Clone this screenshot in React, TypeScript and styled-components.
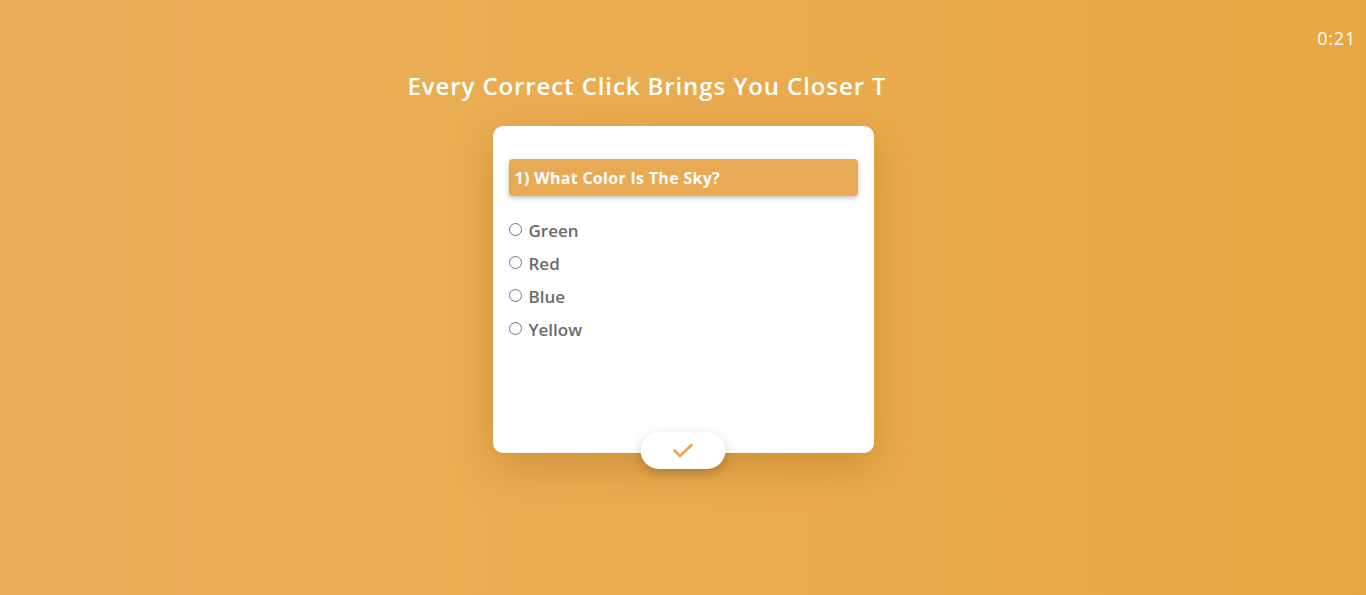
import React from "react";
import styled, { createGlobalStyle } from "styled-components";

const Global = createGlobalStyle`
  html, body { margin: 0; padding: 0; }
  body { font-family: "Open Sans", "Noto Sans", sans-serif; }
`;

const Page = styled.div`
  min-height: 595px;
  background: linear-gradient(to right, #e9b05a 0%, #e9ab4e 55%, #e8a641 100%);
  display: flex;
  flex-direction: column;
  align-items: center;
`;

const TimerRow = styled.div`
  width: 100%;
  box-sizing: border-box;
  display: flex;
  justify-content: flex-end;
  padding: 28px 10px 0 0;
`;

const Timer = styled.span`
  color: #fff;
  font-size: 18px;
  line-height: 20px;
  font-weight: 500;
  letter-spacing: 0.8px;
`;

const TitleWrap = styled.div`
  width: 551px;
  margin-top: 23px;
`;

const TitleClip = styled.h1`
  width: 477px;
  margin: 0;
  overflow: hidden;
  white-space: nowrap;
  color: #fff;
  font-size: 24px;
  line-height: 30px;
  font-weight: 600;
  letter-spacing: 0.9px;
`;

const Card = styled.div`
  position: relative;
  box-sizing: border-box;
  width: 381px;
  height: 327px;
  margin-top: 25px;
  padding: 33px 16px;
  background: #fff;
  border-radius: 10px;
  box-shadow: 0 14px 40px rgba(140, 80, 0, 0.28);
`;

const Question = styled.div`
  height: 37px;
  box-sizing: border-box;
  display: flex;
  align-items: center;
  padding: 0 6px;
  background: #e9aa55;
  border-radius: 4px;
  box-shadow: 0 2px 5px rgba(0, 0, 0, 0.25);
  color: #fff;
  font-size: 16px;
  font-weight: 700;
  letter-spacing: 0.3px;
`;

const Options = styled.div`
  margin-top: 18px;
  display: flex;
  flex-direction: column;
`;

const Option = styled.label`
  display: flex;
  align-items: center;
  height: 33px;
  gap: 7px;
  color: #6b6b6b;
  font-size: 17px;
  font-weight: 600;
`;

const Radio = styled.input`
  width: 13px;
  height: 13px;
  margin: 0 0 3px 0;
`;

const SubmitButton = styled.button`
  position: absolute;
  left: 50%;
  bottom: -16px;
  transform: translateX(-50%);
  width: 85px;
  height: 37px;
  border: none;
  border-radius: 19px;
  background: #fff;
  box-shadow: 0 4px 12px rgba(0, 0, 0, 0.22);
  display: flex;
  align-items: center;
  justify-content: center;
  padding: 0;
  cursor: pointer;
`;

const options = ["Green", "Red", "Blue", "Yellow"];

export default function App() {
  return (
    <>
      <Global />
      <Page>
        <TimerRow>
          <Timer>0:21</Timer>
        </TimerRow>
        <TitleWrap>
          <TitleClip>Every Correct Click Brings You Closer To Victory!</TitleClip>
        </TitleWrap>
        <Card>
          <Question>1) What Color Is The Sky?</Question>
          <Options>
            {options.map((o) => (
              <Option key={o}>
                <Radio type="radio" name="q1" value={o} />
                {o}
              </Option>
            ))}
          </Options>
          <SubmitButton aria-label="submit">
            <svg width="21" height="15" viewBox="0 0 21 15" fill="none">
              <polyline
                points="2,7.5 7.5,13 19,2"
                stroke="#f5a445"
                strokeWidth="2.6"
                strokeLinecap="round"
                strokeLinejoin="round"
              />
            </svg>
          </SubmitButton>
        </Card>
      </Page>
    </>
  );
}
